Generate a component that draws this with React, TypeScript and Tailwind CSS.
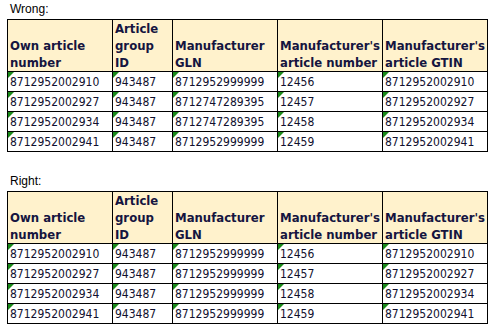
import React from 'react';

type Row = [string, string, string, string, string];

const wrongRows: Row[] = [
  ['8712952002910', '943487', '8712952999999', '12456', '8712952002910'],
  ['8712952002927', '943487', '8712747289395', '12457', '8712952002927'],
  ['8712952002934', '943487', '8712747289395', '12458', '8712952002934'],
  ['8712952002941', '943487', '8712952999999', '12459', '8712952002941'],
];

const rightRows: Row[] = [
  ['8712952002910', '943487', '8712952999999', '12456', '8712952002910'],
  ['8712952002927', '943487', '8712952999999', '12457', '8712952002927'],
  ['8712952002934', '943487', '8712952999999', '12458', '8712952002934'],
  ['8712952002941', '943487', '8712952999999', '12459', '8712952002941'],
];

const headers: string[][] = [
  ['Own article', 'number'],
  ['Article', 'group', 'ID'],
  ['Manufacturer', 'GLN'],
  ["Manufacturer's", 'article number'],
  ["Manufacturer's", 'article GTIN'],
];

const SheetTable: React.FC<{ rows: Row[] }> = ({ rows }) => (
  <div className="grid w-[481px] grid-cols-[105px_60px_105px_105px_105px] border-l border-t border-black font-['DejaVu_Sans',sans-serif] font-stretch-condensed">
    {headers.map((lines, i) => (
      <div
        key={i}
        className="flex h-[52px] flex-col justify-end border-b border-r border-black bg-[#fff2cc] pl-[2px] text-[13px] font-bold leading-[17px] text-[#151540] whitespace-nowrap"
      >
        {lines.map((l) => (
          <span key={l}>{l}</span>
        ))}
      </div>
    ))}
    {rows.map((row, r) =>
      row.map((cell, c) => (
        <div
          key={`${r}-${c}`}
          className="relative h-[20px] border-b border-r border-black pl-[2px] pt-[2px] text-[12px] leading-[17px] text-[#10102e] whitespace-nowrap"
        >
          <div className="absolute left-0 top-0 h-[6px] w-[6px] bg-[#1a8a1a] [clip-path:polygon(0_0,100%_0,0_100%)]" />
          {cell}
        </div>
      ))
    )}
  </div>
);

const App: React.FC = () => {
  return (
    <div className="min-h-[331px] w-[492px] bg-white pl-[7px]">
      <div className="h-[19px] pl-[3px] font-['Liberation_Sans',Arial,sans-serif] text-[12px] leading-[19px] text-black">
        Wrong:
      </div>
      <SheetTable rows={wrongRows} />
      <div className="mt-[20px] h-[19px] pl-[3px] font-['Liberation_Sans',Arial,sans-serif] text-[12px] leading-[19px] text-black">
        Right:
      </div>
      <SheetTable rows={rightRows} />
    </div>
  );
};

export default App;
